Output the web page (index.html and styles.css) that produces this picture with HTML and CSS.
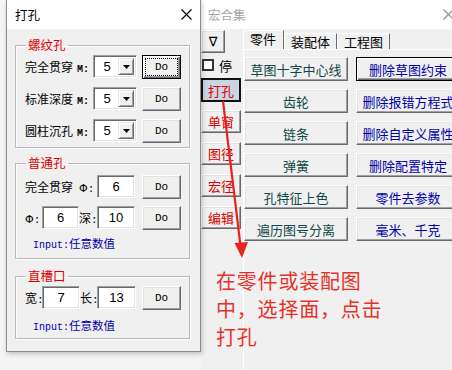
FILE: index.html
```html
<!DOCTYPE html>
<html>
<head>
<meta charset="utf-8">
<title>打孔</title>
<link rel="stylesheet" href="styles.css">
</head>
<body>
<div class="screen">
  <div class="left-area">
    <div class="dialog">
      <div class="dlg-title">
        <span>打孔</span>
        <svg class="close" width="11" height="11" viewBox="0 0 11 11"><path d="M0.5 0.5 L10.5 10.5 M10.5 0.5 L0.5 10.5" stroke="#000" stroke-width="1.1" fill="none"/></svg>
      </div>
      <div class="dlg-body">
        <fieldset class="grp g1">
          <legend>螺纹孔</legend>
          <div class="rows">
            <div class="row">
              <span class="lbl w68">完全贯穿<span class="mono">M:</span></span>
              <div class="combo"><span class="cv">5</span><span class="cbtn"><svg width="7" height="4" viewBox="0 0 7 4"><path d="M0 0 H7 L3.5 4 Z" fill="#000"/></svg></span></div>
              <div class="btn do def"><span class="focus">Do</span></div>
            </div>
            <div class="row">
              <span class="lbl w68">标准深度<span class="mono">M:</span></span>
              <div class="combo"><span class="cv">5</span><span class="cbtn"><svg width="7" height="4" viewBox="0 0 7 4"><path d="M0 0 H7 L3.5 4 Z" fill="#000"/></svg></span></div>
              <div class="btn do">Do</div>
            </div>
            <div class="row">
              <span class="lbl w68">圆柱沉孔<span class="mono">M:</span></span>
              <div class="combo"><span class="cv">5</span><span class="cbtn"><svg width="7" height="4" viewBox="0 0 7 4"><path d="M0 0 H7 L3.5 4 Z" fill="#000"/></svg></span></div>
              <div class="btn do">Do</div>
            </div>
          </div>
        </fieldset>

        <fieldset class="grp g2">
          <legend>普通孔</legend>
          <div class="rows r2">
            <div class="row">
              <span class="lbl w72">完全贯穿<span class="phi sp">Φ</span><span class="colon">:</span></span>
              <div class="inp w38">6</div>
              <div class="btn do">Do</div>
            </div>
            <div class="row">
              <span class="lbl w17"><span class="phi">Φ</span><span class="colon">:</span></span>
              <div class="inp w37">6</div>
              <span class="lbl w18">深<span class="colon">:</span></span>
              <div class="inp w38">10</div>
              <div class="btn do">Do</div>
            </div>
          </div>
          <div class="info">Input:<span class="cjk">任意数值</span></div>
        </fieldset>

        <fieldset class="grp g3">
          <legend>直槽口</legend>
          <div class="rows">
            <div class="row">
              <span class="lbl w17">宽<span class="colon">:</span></span>
              <div class="inp w38">7</div>
              <span class="lbl w17">长<span class="colon">:</span></span>
              <div class="inp w39">13</div>
              <div class="btn do">Do</div>
            </div>
          </div>
          <div class="info i3">Input:<span class="cjk">任意数值</span></div>
        </fieldset>
      </div>
    </div>
  </div>

  <div class="rwin">
    <div class="rw-title">
      <span>宏合集</span>
      <svg class="rw-close" width="14" height="11" viewBox="0 0 14 11"><path d="M1.5 0.5 L11.5 10.5 M11.5 0.5 L1.5 10.5" stroke="#8a8a8a" stroke-width="1.1" fill="none"/></svg>
    </div>
    <div class="rw-body">
      <div class="side">
        <div class="btn tri">∇</div>
        <div class="chkrow"><span class="chk"></span><span>停</span></div>
        <div class="btn sbtn on">打孔</div>
        <div class="btn sbtn">单窗</div>
        <div class="btn sbtn">图径</div>
        <div class="btn sbtn">宏径</div>
        <div class="btn sbtn">编辑</div>
      </div>
      <div class="tabctl">
        <div class="tabhead">
          <div class="tab sel">零件</div>
          <div class="tab">装配体</div>
          <div class="tab">工程图</div>
        </div>
        <div class="panel">
          <div class="grid">
            <div class="btn gb teal">草图十字中心线</div>
            <div class="btn gb blue def2">删除草图约束</div>
            <div class="btn gb teal">齿轮</div>
            <div class="btn gb blue">删除报错方程式</div>
            <div class="btn gb teal">链条</div>
            <div class="btn gb blue">删除自定义属性</div>
            <div class="btn gb teal">弹簧</div>
            <div class="btn gb blue">删除配置特定</div>
            <div class="btn gb teal">孔特征上色</div>
            <div class="btn gb blue">零件去参数</div>
            <div class="btn gb teal">遍历图号分离</div>
            <div class="btn gb blue">毫米、千克</div>
          </div>
        </div>
      </div>
    </div>
  </div>

  <svg class="arrow" width="452" height="370" viewBox="0 0 452 370">
    <path d="M223 101 L240.5 246" stroke="#e8231d" stroke-width="2.2" fill="none"/>
    <path d="M234.5 243 L248 242 L242 258 Z" fill="#e8231d"/>
  </svg>
  <div class="note">在零件或装配图<br>中，选择面，点击<br>打孔</div>
</div>
</body>
</html>
```

FILE: styles.css
```css
* { box-sizing: border-box; margin: 0; padding: 0; }
html, body { width: 452px; height: 370px; overflow: hidden; }
body {
  background: #f0f0f0;
  font-family: "Noto Sans CJK SC", "Noto Sans", sans-serif;
  font-size: 12px;
  color: #000;
}
.screen {
  position: relative;
  display: flex;
  width: 452px;
  height: 370px;
  overflow: hidden;
}

/* ---------- left dialog ---------- */
.left-area {
  flex: none;
  width: 201px;
  padding-left: 6px;
  background: #f4f4f4;
  position: relative;
  z-index: 2;
}
.dialog {
  width: 195px;
  height: 352px;
  border: 1px solid #8c8c8c;
  border-top: none;
  background: #f0f0f0;
  display: flex;
  flex-direction: column;
  box-shadow: 1px 2px 5px rgba(0, 0, 0, 0.22);
}
.dlg-title {
  flex: none;
  height: 29px;
  background: #fff;
  display: flex;
  align-items: center;
  justify-content: space-between;
  padding: 0 8px 0 8px;
  font-size: 12.5px;
}
.dlg-body {
  flex: 1;
  padding: 8px 0 0 8px;
}
.grp {
  width: 175px;
  border: 1px solid #b9b9b9;
  box-shadow: inset 1px 1px #fff, 1px 1px #fff;
  padding: 0 0 5px 0;
  margin: 0;
  min-width: 0;
}
.grp legend {
  margin-left: 10px;
  padding: 0 2px;
  color: #e00000;
  font-size: 12.5px;
  line-height: 16px;
}
.g2 { margin-top: 7px; padding-bottom: 7px; }
.g3 { margin-top: 9px; padding-bottom: 5px; }
.rows {
  padding: 2px 0 0 9px;
  display: flex;
  flex-direction: column;
  gap: 9px;
}
.r2 { padding-top: 4px; gap: 8px; }
.row {
  display: flex;
  align-items: center;
  height: 23px;
}
.lbl {
  flex: none;
  font-size: 12px;
  white-space: nowrap;
}
.w68 { width: 68px; }
.w72 { width: 72px; }
.w17 { width: 17px; }
.w18 { width: 18px; }
.mono {
  margin-left: 4px;
  font-family: "Liberation Mono", monospace;
  font-size: 10px;
  font-weight: bold;
}
.phi {
  font-family: "DejaVu Sans", sans-serif;
  font-size: 11px;
}
.phi.sp { margin-left: 6px; }
.colon {
  font-family: "Liberation Mono", monospace;
  font-size: 11px;
}
.combo {
  flex: none;
  width: 44px;
  height: 23px;
  background: #fff;
  border: 1px solid;
  border-color: #a0a0a0 #fff #fff #a0a0a0;
  box-shadow: inset 1px 1px #696969, inset -1px -1px #e3e3e3;
  display: flex;
  align-items: center;
  padding: 2px;
}
.cv {
  flex: 1;
  text-align: center;
  font-family: "Liberation Sans", sans-serif;
  font-size: 13px;
}
.cbtn {
  width: 16px;
  height: 17px;
  background: #f0f0f0;
  border: 1px solid;
  border-color: #e3e3e3 #696969 #696969 #e3e3e3;
  box-shadow: inset 1px 1px #fff, inset -1px -1px #a0a0a0;
  display: flex;
  align-items: center;
  justify-content: center;
}
.inp {
  flex: none;
  height: 23px;
  background: #fff;
  border: 1px solid;
  border-color: #a0a0a0 #fff #fff #a0a0a0;
  box-shadow: inset 1px 1px #696969, inset -1px -1px #e3e3e3;
  display: flex;
  align-items: center;
  justify-content: center;
  font-family: "Liberation Sans", sans-serif;
  font-size: 13px;
}
.w37 { width: 37px; }
.w38 { width: 38px; }
.w39 { width: 39px; }
.btn {
  flex: none;
  background: #f0f0f0;
  border: 1px solid;
  border-color: #fff #696969 #696969 #fff;
  box-shadow: inset -1px -1px #a0a0a0, inset 1px 1px #e3e3e3;
  display: flex;
  align-items: center;
  justify-content: center;
  white-space: nowrap;
}
.do {
  width: 39px;
  height: 24px;
  margin-left: auto;
  margin-right: 8px;
  font-family: "Liberation Mono", monospace;
  font-size: 11px;
}
.def {
  border: 1px solid #000;
  box-shadow: inset 1px 1px #fff, inset -1px -1px #696969, inset -2px -2px #a0a0a0;
}
.focus {
  display: flex;
  align-items: center;
  justify-content: center;
  width: 31px;
  height: 16px;
  outline: 1px dotted #000;
}
.info {
  margin: 6px 0 0 17px;
  height: 16px;
  line-height: 16px;
  color: #0000a8;
  font-family: "Liberation Mono", monospace;
  font-size: 10px;
}
.i3 { margin-top: 8px; }
.info .cjk {
  font-family: "Noto Sans CJK SC", sans-serif;
  font-size: 11.5px;
}

/* ---------- right window ---------- */
.rwin {
  flex: none;
  width: 262px;
  display: flex;
  flex-direction: column;
  background: #f0f0f0;
}
.rw-title {
  flex: none;
  height: 29px;
  background: #fff;
  display: flex;
  align-items: center;
  padding: 0 7px 0 7px;
  color: #a3a3a3;
  font-size: 12.5px;
}
.rw-close { margin-left: auto; }
.rw-body {
  flex: 1;
  display: flex;
  padding-top: 1px;
}
.side {
  flex: none;
  width: 41px;
  display: flex;
  flex-direction: column;
  align-items: flex-start;
}
.tri {
  width: 24px;
  height: 23px;
  font-family: "DejaVu Sans", sans-serif;
  font-size: 13px;
}
.chkrow {
  margin-top: 5px;
  height: 14px;
  display: flex;
  align-items: center;
  gap: 5px;
  padding-left: 1px;
  font-size: 13px;
}
.chk {
  width: 12px;
  height: 12px;
  background: #fff;
  border: 2px solid #333;
}
.sbtn {
  width: 40px;
  height: 23px;
  margin-bottom: 9px;
  color: #e00000;
  font-size: 13px;
}
.chkrow + .sbtn { margin-top: 6px; }
.sbtn.on {
  height: 24px;
  background: #c9d5e3;
  border: 2px solid #111;
  box-shadow: none;
  margin-bottom: 8px;
}
.tabctl {
  flex: 1;
  display: flex;
  flex-direction: column;
  margin-left: 1px;
}
.tabhead {
  flex: none;
  height: 20px;
  display: flex;
  align-items: flex-end;
}
.tab {
  height: 17px;
  padding: 0 6px;
  border: 1px solid;
  border-bottom: none;
  border-color: #fff #696969 transparent #fff;
  font-size: 13px;
  line-height: 15px;
}
.tab.sel {
  height: 20px;
  padding: 0 7px 0 6px;
}
.panel {
  flex: 1;
  border-top: 1px solid #fff;
  border-left: 1px solid #fff;
  margin-top: -1px;
}
.grid {
  padding: 7px 0 0 0;
  display: grid;
  grid-template-columns: 104px 104px;
  grid-auto-rows: 24px;
  column-gap: 8px;
  row-gap: 8px;
}
.gb { font-size: 13px; }
.teal { color: #0f4848; }
.blue { color: #0000a8; }
.def2 {
  border: 1px solid #000;
  box-shadow: inset 1px 1px #fff, inset -1px -1px #696969, inset -2px -2px #a0a0a0;
}

/* ---------- annotation overlay ---------- */
.arrow {
  position: absolute;
  left: 0;
  top: 0;
  z-index: 5;
  pointer-events: none;
}
.note {
  position: absolute;
  left: 216px;
  top: 267px;
  z-index: 5;
  color: #e8302a;
  font-size: 20px;
  line-height: 28px;
  letter-spacing: 0.8px;
}
```
